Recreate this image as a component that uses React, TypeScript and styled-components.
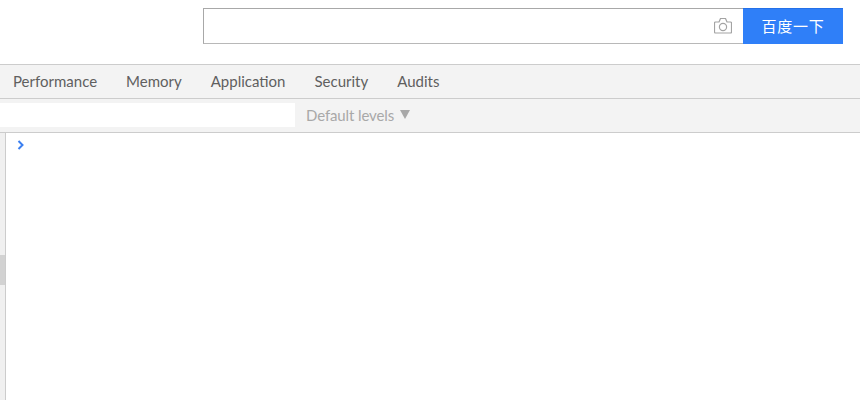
import React from "react";
import styled, { createGlobalStyle } from "styled-components";

const GlobalStyle = createGlobalStyle`
  html, body {
    margin: 0;
    padding: 0;
    background: #fff;
    overflow: hidden;
  }
  body {
    font-family: Lato, "Open Sans", "Noto Sans CJK SC", sans-serif;
  }
`;

const Page = styled.div`
  width: 860px;
  height: 400px;
  display: flex;
  flex-direction: column;
  overflow: hidden;
`;

const SearchHeader = styled.header`
  height: 64px;
  box-sizing: border-box;
  padding: 8px 17px 0 203px;
  display: flex;
  align-items: flex-start;
`;

const SearchBox = styled.div`
  flex: 1;
  height: 36px;
  box-sizing: border-box;
  border: 1px solid #b8b8b8;
  border-top-color: #a8a8a8;
  border-left-color: #a8a8a8;
  border-right: none;
  display: flex;
  align-items: center;
  justify-content: flex-end;
  padding-right: 11px;
`;

const SearchButton = styled.button`
  width: 100px;
  height: 36px;
  border: none;
  border-top: 1px solid #2470e8;
  padding: 0 0 3px;
  background: #2f7ff8;
  color: #fff;
  font-family: "Noto Sans CJK SC", sans-serif;
  font-size: 15px;
  letter-spacing: 0.7px;
`;

const TabBar = styled.nav`
  height: 35px;
  box-sizing: border-box;
  border-top: 1px solid #ccc;
  border-bottom: 1px solid #ccc;
  background: #f3f3f3;
  display: flex;
  align-items: center;
  padding: 0 0 2px 13px;
  gap: 29px;
`;

const Tab = styled.span`
  font-size: 15px;
  color: #5f5f5f;
`;

const FilterBar = styled.div`
  height: 34px;
  box-sizing: border-box;
  border-bottom: 1px solid #ccc;
  background: #f3f3f3;
  display: flex;
  align-items: center;
`;

const FilterInput = styled.div`
  width: 295px;
  height: 24px;
  margin-top: -2px;
  background: #fff;
`;

const LevelsSelect = styled.div`
  margin: -2px 0 0 11px;
  display: flex;
  align-items: center;
  gap: 6px;
  font-size: 15px;
  letter-spacing: -0.12px;
  color: #a8a8a8;
`;

const LevelsCaret = styled.span`
  width: 0;
  height: 0;
  margin-top: -1px;
  border-left: 5px solid transparent;
  border-right: 5px solid transparent;
  border-top: 9px solid #a8a8a8;
`;

const ConsoleArea = styled.main`
  flex: 1;
  display: flex;
`;

const Gutter = styled.aside`
  width: 6px;
  box-sizing: border-box;
  border-right: 1px solid #ccc;
  background: #f0f0f0;
  padding-top: 122px;
`;

const GutterThumb = styled.div`
  height: 30px;
  background: #d2d2d2;
`;

const PromptRow = styled.div`
  flex: 1;
  padding: 7px 0 0 11px;
`;

const CameraIcon = () => (
  <svg width="18" height="16" viewBox="0 0 18 16" fill="none" stroke="#a3a3a3" strokeWidth="1.2">
    <path
      d="M1.5 4h3.5l1.5-3.5h5l1.5 3.5h3.5a1 1 0 0 1 1 1v9a1 1 0 0 1-1 1h-15a1 1 0 0 1-1-1v-9a1 1 0 0 1 1-1z"
      strokeLinejoin="round"
    />
    <circle cx="9" cy="9" r="3.6" />
  </svg>
);

const PromptIcon = () => (
  <svg width="8" height="10" viewBox="0 0 8 10" fill="none" stroke="#3b7ff0" strokeWidth="2" style={{ display: "block" }}>
    <path d="M1.5 1l4 4-4 4" />
  </svg>
);

const tabs = ["Performance", "Memory", "Application", "Security", "Audits"];

export default function App() {
  return (
    <Page>
      <GlobalStyle />
      <SearchHeader>
        <SearchBox>
          <CameraIcon />
        </SearchBox>
        <SearchButton>百度一下</SearchButton>
      </SearchHeader>
      <TabBar>
        {tabs.map((t) => (
          <Tab key={t}>{t}</Tab>
        ))}
      </TabBar>
      <FilterBar>
        <FilterInput />
        <LevelsSelect>
          Default levels
          <LevelsCaret />
        </LevelsSelect>
      </FilterBar>
      <ConsoleArea>
        <Gutter>
          <GutterThumb />
        </Gutter>
        <PromptRow>
          <PromptIcon />
        </PromptRow>
      </ConsoleArea>
    </Page>
  );
}
